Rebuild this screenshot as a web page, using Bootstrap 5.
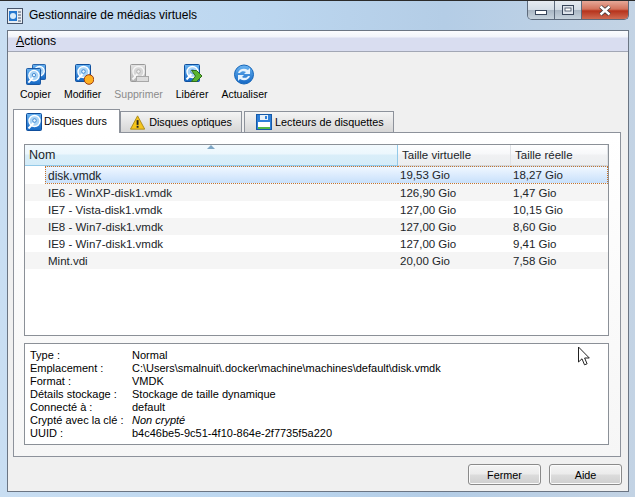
<!DOCTYPE html>
<html lang="fr">
<head>
    <meta charset="UTF-8">
    <meta name="viewport" content="width=device-width, initial-scale=1.0">
    <title>Gestionnaire de médias virtuels</title>
    <link href="https://cdn.jsdelivr.net/npm/bootstrap@5.3.0/dist/css/bootstrap.min.css" rel="stylesheet">
    <style>
        html, body { height: 497px; overflow: hidden; }
        body {
            margin: 0;
            background: #bcd5ee;
            color: #000;
            font-family: "Liberation Sans", Arial, sans-serif;
            font-size: 11px;
            line-height: 13px;
        }
        .vb-window {
            position: relative;
            width: 635px;
            height: 497px;
            background: linear-gradient(90deg, #c9def2 0%, #bcd7f0 40%, #b4cde6 70%, #c3d3e4 100%);
            border-top: 1px solid #2b2b2b;
        }
        .vb-title { height: 29px; padding-left: 7px; }
        .vb-title-text { font-size: 12px; margin-left: 6px; color: #000; }
        .vb-caption { height: 19px; margin-right: 6px; align-self: flex-start; border: 1px solid #5d6a7b; border-top: 0; border-radius: 0 0 5px 5px; overflow: hidden; }
        .vb-cap { background: linear-gradient(#e6ebf1 0%, #d4dde6 48%, #aab7c4 52%, #c6d2dc 100%); height: 100%; width: 27px; border-right: 1px solid #5d6a7b; }
        .vb-cap-close { width: 46px; border-right: 0; background: linear-gradient(#e6a898 0%, #d3735c 45%, #b6331c 55%, #cf6b52 100%); }
        .vb-client {
            height: 462px;
            margin: 0 6px 0 7px;
            background: #f0f0f0;
            border: 1px solid #6b7583;
        }
        .vb-menu {
            height: 21px;
            padding-left: 8px;
            line-height: 21px;
            font-size: 12.25px;
            background: linear-gradient(#fbfcfe 0%, #f2f4fa 30%, #d9ddf0 35%, #d9ddf0 100%);
            border-bottom: 1px solid #a2a7b5;
        }
        .vb-tools { height: 56px; padding: 12px 0 0 12px; gap: 13px; }
        .vb-tool { text-align: center; font-size: 10.5px; line-height: 14px; }
        .vb-tool svg { display: block; margin: 0 auto 2px; }
        .vb-off { color: #8b8b8b; }
        .vb-tabs { padding-left: 5px; height: 24px; border: 0; align-items: flex-end; }
        .vb-tab { height: 21px; padding: 0 9px; background: linear-gradient(#f4f4f4, #d6d6d6); border: 1px solid #8d929b; border-bottom: 0; font-size: 10.8px; white-space: nowrap; }
        .vb-tab.active-tab { height: 24px; width: 107px; background: #fff; position: relative; z-index: 1; margin-bottom: -1px; padding: 0 12px; gap: 2px; }
        .vb-tab-opt { width: 122px; margin-right: 2px; gap: 4px; }
        .vb-tab-flop { width: 150px; padding-left: 11px; gap: 3px; }
        .vb-pane {
            margin: 0 7px 0 5px;
            height: 325px;
            padding: 11px 11px 12px 10px;
            background: linear-gradient(#fff 0%, #f6f6f6 100%);
            border: 1px solid #8d929b;
        }
        .vb-list { height: 192px; background: #fff; border: 1px solid #8b9097; overflow: hidden; }
        .vb-grid { table-layout: fixed; width: 100%; margin: 0; font-size: 11.5px; border-collapse: separate; border-spacing: 0; }
        .vb-grid th { font-weight: 400; height: 21px; padding: 3px 0 0 4px; line-height: 14px; vertical-align: top; border: 0; border-right: 1px solid #dfe2e6; background: linear-gradient(#fff 0%, #f7f8fa 45%, #f0f1f3 50%, #eceef0 100%); border-bottom: 1px solid #d5d5d5; position: relative; }
        .vb-grid th.vb-sorted { background: linear-gradient(#f3fafe 0%, #ecf7fd 45%, #d9eef9 50%, #d4ecf8 100%); border-right: 1px solid #93c9e8; border-bottom: 1px solid #93c9e8; font-size: 12.5px; }
        .vb-grid td { height: 17px; padding: 1px 0 0 2px; line-height: 16px; vertical-align: top; border: 0; background: transparent; white-space: nowrap; box-shadow: none; }
        .vb-grid td:first-child { padding-left: 23px; }
        .vb-grid tr.vb-alt td { background: #f5f5f5; }
        .vb-grid tr.vb-sel td { height: 18px; background: linear-gradient(#f0f7ff, #c8e0fb); border-top: 1px dotted #c8742a; border-bottom: 1px dotted #c8742a; line-height: 16px; padding-top: 0; }
        .vb-grid tr.vb-sel td:last-child { border-right: 1px dotted #c8742a; }
        .vb-grid tr.vb-sel td:first-child { background: #fff; border: 0; padding: 0; font-size: 12px; }
        .vb-sel-name { display: block; margin-left: 20px; padding-left: 2px; height: 18px; line-height: 18px; background: linear-gradient(#f0f7ff, #c8e0fb); border: 1px dotted #c8742a; border-right: 0; }
        .vb-sort { position: absolute; top: 0; left: 182px; width: 0; height: 0; border-left: 4px solid transparent; border-right: 4px solid transparent; border-bottom: 4px solid #7ea6c4; }
        .vb-info { margin-top: 7px; height: 102px; padding: 5px 5px; background: #fff; border: 1px solid #8b9097; font-size: 11px; }
        .vb-info-row { height: 13px; white-space: nowrap; }
        .vb-info-label { width: 102px; flex: none; }
        .vb-foot { padding: 7px 6px 0 0; gap: 8px; }
        .vb-btn { width: 73px; height: 21px; padding: 0; font-size: 10.8px; line-height: 18px; color: #000; border: 1px solid #8a8a8a; border-radius: 3px; background: linear-gradient(#f4f4f4 0%, #ebebeb 48%, #dcdcdc 52%, #cfcfcf 100%); box-shadow: inset 0 0 0 1px #fbfbfb; }
        .vb-cursor { position: absolute; left: 577px; top: 345px; }
    </style>
</head>
<body>
    <svg width="0" height="0" class="position-absolute">
        <defs>
            <linearGradient id="gBlue" x1="0" y1="0" x2="0" y2="1"><stop offset="0" stop-color="#6ab4f2"/><stop offset="1" stop-color="#1467c4"/></linearGradient>
            <linearGradient id="gGrey" x1="0" y1="0" x2="0" y2="1"><stop offset="0" stop-color="#e4e4e4"/><stop offset="1" stop-color="#b4b4b4"/></linearGradient>
            <symbol id="hd" viewBox="0 0 16 18">
                <rect x=".5" y=".5" width="15" height="17" rx="1" fill="url(#gBlue)" stroke="#0f4e9c"/>
                <circle cx="8.500" cy="8" r="5.500" fill="#a9d4f6" stroke="#fff" stroke-width="1.400"/>
                <circle cx="8.500" cy="7.500" r="1.800" fill="#e8f5fe" stroke="#2a76c6" stroke-width=".8"/>
                <path d="M2.500 15.500 7.500 10" stroke="#fff" stroke-width="2"/>
            </symbol>
            <symbol id="hdGrey" viewBox="0 0 16 18">
                <rect x=".5" y=".5" width="15" height="17" rx="1" fill="url(#gGrey)" stroke="#9a9a9a"/>
                <circle cx="8.500" cy="8" r="5.500" fill="#d6d6d6" stroke="#f6f6f6" stroke-width="1.400"/>
                <circle cx="8.500" cy="7.500" r="1.800" fill="#f0f0f0" stroke="#a8a8a8" stroke-width=".8"/>
                <path d="M2.500 15.500 7.500 10" stroke="#f6f6f6" stroke-width="2"/>
            </symbol>
        </defs>
    </svg>

    <div class="vb-window">
        <div class="vb-title d-flex align-items-center">
            <svg width="16" height="16" viewBox="0 0 16 16">
                <rect x=".5" y=".5" width="15" height="15" fill="#e8edf3" stroke="#46546a"/>
                <rect x="2" y="3" width="8" height="10" fill="#2578cf"/>
                <circle cx="6" cy="8" r="3" fill="#d8ecfb"/>
                <path d="M11 4h3M11 7h3M11 10h3M11 13h3" stroke="#46546a"/>
            </svg>
            <span class="vb-title-text">Gestionnaire de médias virtuels</span>
            <div class="vb-caption d-flex ms-auto">
                <div class="vb-cap d-flex align-items-end justify-content-center pb-1">
                    <svg width="13" height="5"><rect x=".5" y=".5" width="11" height="4" fill="#fff" stroke="#39465a"/></svg>
                </div>
                <div class="vb-cap d-flex align-items-center justify-content-center">
                    <svg width="12" height="10"><rect x=".5" y=".5" width="11" height="9" fill="#dfe5ec" stroke="#39465a"/><rect x="3" y="3" width="6" height="3" fill="#fff" stroke="#39465a" stroke-width=".8"/></svg>
                </div>
                <div class="vb-cap vb-cap-close d-flex align-items-center justify-content-center">
                    <svg width="14" height="11" viewBox="0 0 14 11"><path d="M2.5 1.5 11.5 9.5M11.5 1.5 2.5 9.5" stroke="#39393a" stroke-width="4"/><path d="M2.5 1.5 11.5 9.5M11.5 1.5 2.5 9.5" stroke="#fff" stroke-width="2.4"/></svg>
                </div>
            </div>
        </div>

        <div class="vb-client">
            <div class="vb-menu"><span class="text-decoration-underline">A</span>ctions</div>

            <div class="vb-tools d-flex">
                <div class="vb-tool">
                    <svg width="22" height="21" viewBox="0 0 22 21"><use href="#hd" x="8" y="0" width="14" height="16"/><use href="#hd" x="2" y="4" width="15" height="17"/></svg>
                    Copier
                </div>
                <div class="vb-tool">
                    <svg width="22" height="21" viewBox="0 0 22 21"><use href="#hd" x="3" y="0" width="16" height="18"/><circle cx="17" cy="15.5" r="4.8" fill="#ffb020" stroke="#9c3d14"/></svg>
                    Modifier
                </div>
                <div class="vb-tool vb-off">
                    <svg width="22" height="21" viewBox="0 0 22 21"><use href="#hdGrey" x="2" y="0" width="16" height="18"/><rect x="8.500" y="12.500" width="12" height="5" fill="#dcdcdc" stroke="#a8a8a8"/></svg>
                    Supprimer
                </div>
                <div class="vb-tool">
                    <svg width="22" height="21" viewBox="0 0 22 21"><use href="#hd" x="3" y="0" width="16" height="18"/><path d="M10.500 6.500h5l5.500 5.500-5.500 5.500h-5l4-5.500z" fill="#5cb531" stroke="#2f6e18"/></svg>
                    Libérer
                </div>
                <div class="vb-tool">
                    <svg width="22" height="21" viewBox="0 0 22 21"><circle cx="11" cy="10.500" r="9.500" fill="url(#gBlue)" stroke="#1565b8"/><path d="M5 9C6 5 11 3.500 15 6l2-2v6h-6l2-2C11 6.500 8 7 7 9z" fill="#e6f3fd"/><path d="M17 12C16 16 11 17.500 7 15l-2 2v-6h6l-2 2C11 14.500 14 14 15 12z" fill="#e6f3fd"/></svg>
                    Actualiser
                </div>
            </div>

            <div class="vb-tabs d-flex">
                <div class="vb-tab active-tab d-flex align-items-center">
                    <svg width="16" height="18"><use href="#hd" width="16" height="18"/></svg>
                    <span>Disques durs</span>
                </div>
                <div class="vb-tab vb-tab-opt d-flex align-items-center">
                    <svg width="16" height="15" viewBox="0 0 16 15"><path d="M8 .5 15.500 14.500H.5z" fill="#f6c51c" stroke="#a98a1a"/><path d="M8 5v5" stroke="#222" stroke-width="2"/><path d="M8 11v2" stroke="#222" stroke-width="2"/></svg>
                    <span>Disques optiques</span>
                </div>
                <div class="vb-tab vb-tab-flop d-flex align-items-center">
                    <svg width="16" height="16" viewBox="0 0 16 16"><rect x=".5" y=".5" width="15" height="15" fill="#2f7fd8" stroke="#1559a8"/><rect x="4" y="1" width="8" height="5" fill="#e8f0f8"/><rect x="9" y="2" width="2" height="3" fill="#2f7fd8"/><rect x="2" y="8" width="12" height="7" fill="#fff"/><rect x="2" y="13" width="12" height="2" fill="#54b948"/></svg>
                    <span>Lecteurs de disquettes</span>
                </div>
            </div>

            <div class="vb-pane">
                <div class="vb-list">
                    <table class="table vb-grid">
                        <colgroup><col style="width:373px"><col style="width:113px"><col></colgroup>
                        <thead>
                            <tr><th class="vb-sorted">Nom<span class="vb-sort"></span></th><th>Taille virtuelle</th><th>Taille réelle</th></tr>
                        </thead>
                        <tbody>
                            <tr class="vb-sel"><td><span class="vb-sel-name">disk.vmdk</span></td><td>19,53 Gio</td><td>18,27 Gio</td></tr>
                            <tr class="vb-alt"><td>IE6 - WinXP-disk1.vmdk</td><td>126,90 Gio</td><td>1,47 Gio</td></tr>
                            <tr><td>IE7 - Vista-disk1.vmdk</td><td>127,00 Gio</td><td>10,15 Gio</td></tr>
                            <tr class="vb-alt"><td>IE8 - Win7-disk1.vmdk</td><td>127,00 Gio</td><td>8,60 Gio</td></tr>
                            <tr><td>IE9 - Win7-disk1.vmdk</td><td>127,00 Gio</td><td>9,41 Gio</td></tr>
                            <tr class="vb-alt"><td>Mint.vdi</td><td>20,00 Gio</td><td>7,58 Gio</td></tr>
                        </tbody>
                    </table>
                </div>
                <div class="vb-info">
                    <div class="vb-info-row d-flex"><span class="vb-info-label">Type :</span><span>Normal</span></div>
                    <div class="vb-info-row d-flex"><span class="vb-info-label">Emplacement :</span><span>C:\Users\smalnuit\.docker\machine\machines\default\disk.vmdk</span></div>
                    <div class="vb-info-row d-flex"><span class="vb-info-label">Format :</span><span>VMDK</span></div>
                    <div class="vb-info-row d-flex"><span class="vb-info-label">Détails stockage :</span><span>Stockage de taille dynamique</span></div>
                    <div class="vb-info-row d-flex"><span class="vb-info-label">Connecté à :</span><span>default</span></div>
                    <div class="vb-info-row d-flex"><span class="vb-info-label">Crypté avec la clé :</span><span class="fst-italic">Non crypté</span></div>
                    <div class="vb-info-row d-flex"><span class="vb-info-label">UUID :</span><span>b4c46be5-9c51-4f10-864e-2f7735f5a220</span></div>
                </div>
            </div>

            <div class="vb-foot d-flex justify-content-end">
                <button type="button" class="btn vb-btn">Fermer</button>
                <button type="button" class="btn vb-btn">Aide</button>
            </div>
        </div>

        <svg class="vb-cursor" width="14" height="21" viewBox="0 0 14 21"><path d="M1.500 1v15l3.500-3.200 2.500 6 2.600-1-2.500-5.800h4.700z" fill="#fff" stroke="#222"/></svg>
    </div>

    <script src="https://cdn.jsdelivr.net/npm/bootstrap@5.3.0/dist/js/bootstrap.bundle.min.js"></script>
</body>
</html>
